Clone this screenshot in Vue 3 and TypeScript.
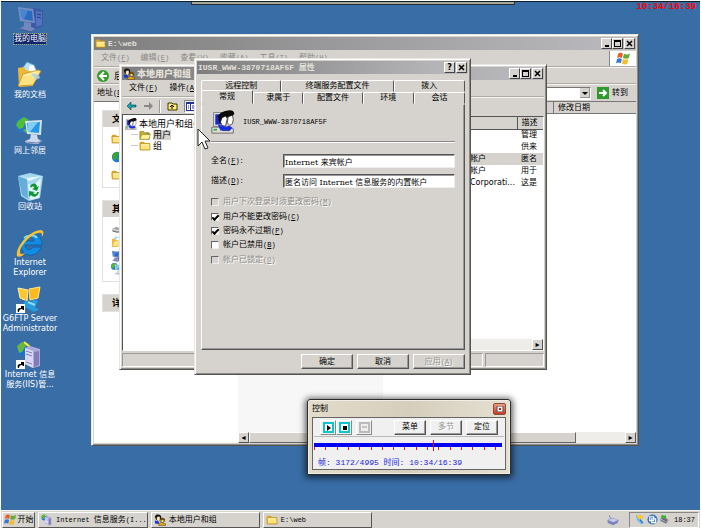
<script setup lang="ts">
import { h, ref } from 'vue'

// Renders text with Latin runs in the monospaced face; "&F" marks an underlined access key.
const Mix = (props: { t: string }) =>
  h(
    'span',
    { class: 'mix' },
    (props.t.match(/&.|[\x21-\x25\x27-\x7e ]+|[^\x20-\x7e]+/g) ?? []).map((s) =>
      s[0] === '&'
        ? h('u', { class: 'lat' }, s[1])
        : s.charCodeAt(0) < 128
          ? h('span', { class: 'lat' }, s)
          : s,
    ),
  )
Mix.props = ['t']

const art: Record<string, string> = {
  computer:
    '<path d="M18 3l9 2v16l-8 3-4-3V5z" fill="#3c55a5"/><path d="M20 6l6 1v13l-6 2z" fill="#5975c4"/><path d="M21 9l4 1M21 12l4 1" stroke="#24387c"/><path d="M2 2l15 2 2 14-15-2z" fill="#8296c6"/><path d="M4 4l12 2 1 10-11-2z" fill="#286bc5"/><path d="M4 4l8 1-4 9H6z" fill="#4e8bda"/><path d="M8 17l7 1v4l5 2-4 3-13-3 5-3z" fill="#7e8cc1"/><path d="M4 24l11 3 5-3" fill="none" stroke="#455499"/>',
  docs:
    '<path d="M11 1l7 3 6 13-13 5L6 8z" fill="#b9e0fa" stroke="#5d9cd2" stroke-width=".7"/><path d="M13 5l4-1 5 10-9 4z" fill="#fff"/><path d="M2 7l6-1 2 3 7 2v14l-14 1z" fill="#efb936"/><path d="M2 25L7 13l15-4 3 1-8 14z" fill="#ffe381" stroke="#c28d20" stroke-width=".7"/><path d="M7 15l14-4" stroke="#fff7bd"/><path d="M15 12l5 7 2-5" fill="#abd5ef"/>',
  network:
    '<circle cx="8" cy="8" r="8" fill="#2874cf"/><path d="M2 4l6-4 5 3-4 3-2 5-4 1-3-4zM7 13l5-2 3 2-5 3z" fill="#51bd37"/><path d="M9 4l17-1-1 15-14-1z" fill="#d4e2ef"/><path d="M11 6l13-1-1 11-11-1z" fill="#2696e6"/><path d="M12 6l10-1-8 10h-2z" fill="#81cef8"/><path d="M15 17l6 1 1 4 4 2-4 3-12-1-1-2 5-2z" fill="#ced8ed"/><path d="M10 25l11 1 5-2" fill="none" stroke="#7280b0"/>',
  recycle:
    '<path d="M2 3l12-3 13 3-3 22-11 3L5 23z" fill="#a6d7f0"/><path d="M2 3l9 2 15-2-13 5z" fill="#e7f8ff"/><path d="M2 3l4 19 6 4-1-20z" fill="#66add7"/><path d="M12 11l5 2 8-8-2 20-9 2z" fill="#e2f5ff"/><path d="M14 13c3-4 7-3 7 1l2-1-2 5-5-2 2-1c0-2-2-2-3 0zM23 19c-1 5-6 6-8 3l-2 2v-6l6 1-2 1c2 2 4 1 4-1z" fill="#149636"/>',
  ie:
    '<path d="M26 16H9c0 5 6 6 8 2h8c-2 6-7 9-13 8C1 22 3 7 14 5c8-1 12 4 12 11zM9 12h9c-1-5-8-5-9 0z" fill="#138be0" stroke="#0759a5" stroke-width=".7"/><path d="M8 9c3-3 10-4 13 0" fill="none" stroke="#80d9ff" stroke-width="2"/><path d="M1 27C-1 18 14 1 25 1c4 1 2 5 1 7 0-3 0-5-4-4C14 6 3 18 4 24c1 2 4 1 6-1-3 4-7 6-9 4z" fill="#f9c231"/>',
  g6:
    '<path d="M2 3l10 2-1 11-7-3z" fill="#ffc631" stroke="#fff0a1"/><path d="M13 4l11-2-2 11-8 2z" fill="#ffb91c" stroke="#ffe788"/><path d="M9 15l6 3 3-4 4 2-3 6 4 3-5 2-5-3-6-2z" fill="#269cdf"/><path d="M12 17l7 3" stroke="#89dcff" stroke-width="2"/>',
  iis:
    '<circle cx="8" cy="8" r="7" fill="#1474cf"/><path d="M1 5l5-4 8 2-5 3-3 5-3 1z" fill="#68b63e"/><path d="M8 1l6 5" stroke="#ffe256" stroke-width="2"/><path d="M9 7l5-2 10 3v17l-7 2-8-4z" fill="#aca9dc"/><path d="M9 7l8 3v17l-8-4z" fill="#d9d8f7"/><path d="M18 11l5-1v14l-5 2z" fill="#817cb9"/><path d="M10 10l6 2M10 13l6 2M10 21l6 2" stroke="#827fb5"/>',
  folder:
    '<path d="M1 7l3-3h7l3 3h12v17H2z" fill="#dca624"/><path d="M3 9h22l1 14H3z" fill="#ffe47a" stroke="#936600"/><path d="M4 11h20" stroke="#fff9c4" stroke-width="2"/>',
  openfolder:
    '<path d="M2 6h9l2 3h11v15H2z" fill="#ccae2c" stroke="#5c4d00"/><path d="M7 13h20l-4 11H2z" fill="#fff59c" stroke="#766600"/><path d="M18 8l5 5" stroke="#555" stroke-width="2"/>',
  users:
    '<path d="M3 3h14v16H3z" fill="#e5e3de" stroke="#777"/><path d="M5 5h11v12H5z" fill="#162bc4"/><path d="M1 20h22l3 2v5H1z" fill="#dedbd4" stroke="#646464"/><path d="M3 23h4" stroke="#27af43" stroke-width="2"/><path d="M13 24h9" stroke="#444"/><path d="M8 8C10 3 14 2 18 1c5-2 10 0 9 4l-3 3-6 1-3 2-2 5-3-1z" fill="#080808"/><path d="M13 9l4-2 2 3-1 4-1 5-4-1-2-4z" fill="#fff" stroke="#111" stroke-width=".8"/><path d="M20 8l5-2 1 5-1 5-3 2-3-3z" fill="#fff" stroke="#111" stroke-width=".8"/><path d="M8 17l5 1 4 2 4-2 4 3-3 3H11z" fill="#172ee0"/>',
  people:
    '<path d="M2 6C4-1 17 0 17 7l-2 7H5z" fill="#111"/><path d="M7 6h7v8l-4 3-4-4z" fill="#ffefbd" stroke="#111"/><path d="M2 15l8 2 3 6H3z" fill="#1734d5"/><path d="M15 12c2-5 10-4 11 2l-3 5h-7z" fill="#714600"/><path d="M17 13h6v5l-3 3-4-3z" fill="#ffdd71" stroke="#111"/><path d="M11 22l7-3 9 4v4H11z" fill="#e0a31d" stroke="#3c2700"/>',
  flag:
    '<path d="M4 5c3-3 6-2 9 0l-2 8c-3-2-6-2-9 0z" fill="#ed5b2d"/><path d="M15 5c4 2 7 2 11-1l-2 9c-4 2-7 2-11 0z" fill="#62ae35"/><path d="M2 15c3-2 6-2 9 0l-2 8c-3-2-6-2-9 0z" fill="#3676d2"/><path d="M13 15c3 2 7 2 10 0l-2 9c-3 2-7 2-10-1z" fill="#f5bd28"/>',
  globe:
    '<circle cx="14" cy="14" r="12" fill="#247bd2"/><path d="M4 8l9-6 8 4-6 4-1 7-6 4-5-5zM18 14l7 1-5 8-5-2z" fill="#37a62d"/>',
  printer:
    '<path d="M2 14l10-5 14 5-9 8-14-3z" fill="#a7a7a7"/><path d="M2 14l14 4 10-4" fill="none" stroke="#eee" stroke-width="2"/><path d="M4 19l12 3 9-6" fill="none" stroke="#666" stroke-width="2"/>',
  key:
    '<path d="M2 3l12-1 8 7-8 4 9 10-7 3L5 16z" fill="#6cbdf0"/><path d="M4 2l12 1 6 6-8 5-6-2z" fill="#ffc62d"/><path d="M13 14l6 9" stroke="#226ab6" stroke-width="3"/>',
  grid:
    '<circle cx="14" cy="14" r="13" fill="#3878b9"/><path d="M7 7h10v10H7zM12 12h10v10H12z" fill="none" stroke="#fff" stroke-width="3"/>',
  eject:
    '<path d="M3 12l8-7 14 11-7 9-14-7z" fill="#747a80"/><path d="M4 13l12 5 8-1" stroke="#d8dde2" stroke-width="2"/><path d="M10 11l-6-5 6-5v3h8v6h-8z" fill="#38b52f"/>',
  drive:
    '<path d="M1 14l10-5 16 5-2 7-11 5-12-5z" fill="#7b82bc"/><path d="M2 14l10-4 14 4-11 5z" fill="#c6c9ec"/><path d="M10 10L6 7V3" stroke="#7981bb" fill="none" stroke-width="2"/>',
}
const Icon = (p: { n: string; s: number }) =>
  h('svg', { viewBox: '0 0 28 28', width: p.s, height: p.s, class: 'icon', 'aria-hidden': 'true', innerHTML: art[p.n] })
Icon.props = ['n', 's']

const shortcuts = [
  { icon: 'computer', lines: ['我的电脑'], selected: true },
  { icon: 'docs', lines: ['我的文档'] },
  { icon: 'network', lines: ['网上邻居'] },
  { icon: 'recycle', lines: ['回收站'] },
  { icon: 'ie', lines: ['Internet', 'Explorer'] },
  { icon: 'g6', lines: ['G6FTP Server', 'Administrator'], link: true },
  { icon: 'iis', lines: ['Internet 信息', '服务(IIS)管...'], link: true },
]
const menus = ['文件(&F)', '编辑(&E)', '查看(&V)', '收藏(&A)', '工具(&T)', '帮助(&H)']
const side = [
  { title: '文', icons: ['folder', 'globe', 'folder'], cls: 'files' },
  { title: '其', icons: ['printer', 'docs', 'computer', 'network'], cls: 'places' },
  { title: '详', icons: [], cls: 'details' },
]
const accounts = [
  { name: '', note: '管理' },
  { name: '', note: '供来' },
  { name: '帐户', note: '匿名', selected: true },
  { name: '帐户', note: '用于' },
  { name: 'Corporati...', note: '这是' },
]
const tabsBack = ['远程控制', '终端服务配置文件', '拨入']
const tabsFront = ['常规', '隶属于', '配置文件', '环境', '会话']
const fullName = ref('Internet 来宾帐户')
const description = ref('匿名访问 Internet 信息服务的内置帐户')
const options = ref([
  { text: '用户下次登录时须更改密码(&M)', on: false, off: true },
  { text: '用户不能更改密码(&C)', on: true, off: false },
  { text: '密码永不过期(&P)', on: true, off: false },
  { text: '帐户已禁用(&B)', on: false, off: false },
  { text: '帐户已锁定(&O)', on: false, off: true },
])
const tasks = [
  { icon: 'iis', text: 'Internet 信息服务(I...' },
  { icon: 'people', text: '本地用户和组' },
  { icon: 'folder', text: 'E:\\web' },
]
</script>

<template>
  <div class="screen">
    <main class="desktop">
      <nav class="shortcuts">
        <a v-for="s in shortcuts" :key="s.icon" href="#" class="shortcut">
          <span class="pic" :class="{ dim: s.selected }">
            <Icon :n="s.icon" :s="28" />
            <svg v-if="s.link" class="arrow" viewBox="0 0 9 9" width="9" height="9"><path d="M0 0h9v9H0z" fill="#fff" /><path d="M2 8c-1-3 0-4 3-4V2h3v4H7L6 5C4 5 3 6 3 8z" fill="#000" /></svg>
          </span>
          <span class="label" :class="{ chosen: s.selected }"><span v-for="l in s.lines" :key="l">{{ l }}</span></span>
        </a>
      </nav>
      <div class="handle"></div>
      <div class="clock">10:34/16:39</div>

      <section class="win explorer">
        <header class="title"><Icon n="folder" :s="11" /><Mix class="name" t="E:\web" /><span class="ctl">
          <button aria-label="最小化"><i class="min"></i></button><button aria-label="最大化"><i class="max"></i></button><button class="x" aria-label="关闭"><svg viewBox="0 0 7 7" width="7" height="7"><path d="M1 1l5 5M6 1L1 6" stroke="#000" stroke-width="1.5" /></svg></button></span></header>
        <div class="menubar grey"><Mix v-for="m in menus" :key="m" :t="m" /><span class="flagbox"><Icon n="flag" :s="15" /></span></div>
        <div class="tools">
          <svg viewBox="0 0 12 12" width="12" height="12"><circle cx="6" cy="6" r="6" fill="#329b29" /><path d="M7 2L3 6l4 4M3 6h7" fill="none" stroke="#fff" stroke-width="2" /></svg>后退
        </div>
        <div class="address">
          <label for="addr"><Mix t="地址(&D)" /></label>
          <span class="combo"><select id="addr"><option></option></select><svg viewBox="0 0 10 10" width="10" height="10"><path d="M0 0h10v10H0z" fill="#d6d3ce" /><path d="M0 10h10V0" fill="none" stroke="#555" /><path d="M2 4h6L5 7z" /></svg></span>
          <button class="go"><svg viewBox="0 0 12 12" width="12" height="12"><path d="M0 0h12v12H0z" fill="#2d9a2b" /><path d="M2 6h7M6 3l3 3-3 3" fill="none" stroke="#fff" stroke-width="2" /></svg>转到</button>
        </div>
        <div class="ebody">
          <aside>
            <div v-for="b in side" :key="b.title" class="box" :class="b.cls"><h3>{{ b.title }}</h3><div v-if="b.icons.length" class="stack"><Icon v-for="(n, i) in b.icons" :key="i" :n="n" :s="12" /></div></div>
          </aside>
          <div class="files-view">
            <div class="colhead"><span>修改日期</span></div>
            <div class="blank"><div class="shade"></div></div>
            <div class="scroll"><button class="sb" aria-label="向左">◂</button><div class="thumb"></div><button class="sb end" aria-label="向右">▸</button></div>
          </div>
        </div>
      </section>

      <section class="win manager">
        <header class="title"><Icon n="people" :s="12" /><b class="name">本地用户和组</b><span class="ctl">
          <button aria-label="最小化"><i class="min"></i></button><button aria-label="最大化"><i class="max"></i></button><button class="x" aria-label="关闭"><svg viewBox="0 0 7 7" width="7" height="7"><path d="M1 1l5 5M6 1L1 6" stroke="#000" stroke-width="1.5" /></svg></button></span></header>
        <div class="menubar"><Mix t="文件(&F)" /><Mix t="操作(&A)" /></div>
        <div class="tools">
          <svg viewBox="0 0 10 8" width="10" height="8"><path d="M0 4l4-4v3h5v2H4v3z" fill="#0aa8b5" stroke="#123" stroke-width=".5" /></svg>
          <svg viewBox="0 0 10 8" width="10" height="8"><path d="M10 4L6 0v3H1v2h5v3z" fill="#888" /></svg>
          <i class="sep"></i>
          <svg viewBox="0 0 11 10" width="11" height="10"><path d="M1 2h4l1 1h4v6H1z" fill="#ffec75" stroke="#3c3600" /><path d="M5 8V5M3 6l2-2 2 2" fill="none" stroke="#000" /></svg>
          <span class="pressed"><svg viewBox="0 0 10 9" width="10" height="9"><path d="M0 0h10v9H0z" fill="#24329c" /><path d="M1 2h3v6H1zM5 2h4v6H5z" fill="#fff" /><path d="M2 4h1M2 6h1M7 3v4" stroke="#24329c" /></svg></span>
        </div>
        <div class="mbody">
          <ul class="tree">
            <li><Icon n="users" :s="12" /><span>本地用户和组(本地)</span></li>
            <li class="kid"><Icon n="openfolder" :s="12" /><span class="sel">用户</span></li>
            <li class="kid"><Icon n="folder" :s="12" /><span>组</span></li>
          </ul>
          <div class="list">
            <table>
              <thead><tr><th></th><th class="note">描述</th></tr></thead>
              <tbody><tr v-for="(a, i) in accounts" :key="i" :class="{ sel: a.selected }"><td>{{ a.name }}</td><td class="note">{{ a.note }}</td></tr></tbody>
            </table>
            <div class="scroll"><span class="grow"></span><button class="sb end" aria-label="向右">▸</button></div>
          </div>
        </div>
        <footer class="status"><span></span><span></span></footer>
      </section>

      <section class="win dialog">
        <header class="title"><Mix class="name" t="IUSR_WWW-3870718AF5F 属性" /><span class="ctl"><button aria-label="帮助"><b>?</b></button><button class="x" aria-label="关闭"><svg viewBox="0 0 7 7" width="7" height="7"><path d="M1 1l5 5M6 1L1 6" stroke="#000" stroke-width="1.5" /></svg></button></span></header>
        <div class="tabs back"><button v-for="t in tabsBack" :key="t">{{ t }}</button></div>
        <div class="tabs front"><button v-for="(t, i) in tabsFront" :key="t" :class="{ active: i === 0 }">{{ t }}</button></div>
        <form class="sheet" @submit.prevent>
          <div class="who"><Icon n="users" :s="24" /><Mix t="IUSR_WWW-3870718AF5F" /></div>
          <div class="field"><label for="full"><Mix t="全名(&F):" /></label><input id="full" v-model="fullName" type="text" /></div>
          <div class="field"><label for="desc"><Mix t="描述(&D):" /></label><input id="desc" v-model="description" type="text" /></div>
          <div class="checks">
            <label v-for="o in options" :key="o.text" :class="{ off: o.off }"><input v-model="o.on" type="checkbox" :disabled="o.off" /><Mix :t="o.text" /></label>
          </div>
        </form>
        <div class="actions"><button class="btn">确定</button><button class="btn">取消</button><button class="btn" disabled><Mix t="应用(&A)" /></button></div>
      </section>

      <svg class="cursor" viewBox="0 0 13 22" width="13" height="22"><path d="M1 1v17l4-4 3 7 3-1-3-7h5z" fill="#fff" stroke="#222" /></svg>

      <section class="player">
        <header><span>控制</span><button aria-label="关闭"><svg viewBox="0 0 8 6" width="8" height="6"><path d="M1 0h6v6H1z" fill="#eee" stroke="#555" /><path d="M3 2h2v2H3z" fill="#933" /></svg></button></header>
        <div class="pane">
          <div class="prow">
            <button class="pb" aria-label="播放"><svg viewBox="0 0 11 11" width="11" height="11"><path d="M1 1h9v9H1z" fill="#fff" stroke="#10c4cc" stroke-width="2" /><path d="M4 3l4 3-4 3z" /></svg></button>
            <button class="pb" aria-label="停止"><svg viewBox="0 0 11 11" width="11" height="11"><path d="M1 1h9v9H1z" fill="#fff" stroke="#10c4cc" stroke-width="2" /><path d="M4 4h4v4H4z" /></svg></button>
            <button class="pb last" aria-label="循环" disabled><svg viewBox="0 0 11 11" width="11" height="11"><path d="M1 1h9v9H1z" fill="#eee" stroke="#bbb" stroke-width="2" /><path d="M3 5h5" stroke="#999" /></svg></button>
            <button class="btn">菜单</button><button class="btn" disabled>多节</button><button class="btn">定位</button>
          </div>
          <svg class="track" viewBox="0 0 188 12" preserveAspectRatio="none" shape-rendering="crispEdges"><path d="M0 3h188v4H0z" fill="#0000f0" /><rect v-for="n in 17" :key="n" :x="Math.round((n - 1) * 11.3)" y="7" width="1" height="3" fill="#f01020" /><rect x="119" y="0" width="1" height="11" fill="#f00020" /></svg>
          <p>帧: 3172/4995 时间: 10:34/16:39</p>
        </div>
      </section>
    </main>

    <footer class="taskbar">
      <button class="start"><Icon n="flag" :s="13" />开始</button>
      <button v-for="t in tasks" :key="t.text" class="task"><Icon :n="t.icon" :s="12" /><Mix :t="t.text" /></button>
      <Icon class="lang" n="drive" :s="12" />
      <div class="tray"><Icon n="key" :s="11" /><Icon n="grid" :s="11" /><Icon n="eject" :s="11" /><Mix t="18:37" /></div>
    </footer>
  </div>
</template>

<style>
body { margin: 0; background: #fff; }
.mix { white-space: pre; }
.mix .lat { font: 7px/10px "Liberation Mono", monospace; }
.mix u { text-underline-offset: 1px; }
.title .mix .lat { font-size: 8px; font-weight: bold; }
.icon { display: block; flex: none; }
</style>

<style scoped>
* { box-sizing: border-box; }
.screen {
  min-height: 100vh; padding: 1px 1px 4px; display: flex; flex-direction: column;
  font: 8px/10px "DejaVu Sans", "Noto Sans CJK SC", sans-serif; color: #000;
}
button { font: inherit; color: inherit; margin: 0; padding: 0; border: 0; background: none; display: flex; align-items: center; justify-content: center; }
.desktop { flex: 1; position: relative; overflow: hidden; background: #396da5; border-top: 1px solid #0c1f25; }
.shortcuts { width: 58px; padding-top: 3px; display: flex; flex-direction: column; }
.shortcut { height: 56px; display: flex; flex-direction: column; align-items: center; gap: 1px; color: #fff; text-decoration: none; }
.pic { position: relative; }
.dim { opacity: .85; }
.arrow { position: absolute; left: 0; bottom: 0; }
.label { display: flex; flex-direction: column; align-items: center; white-space: nowrap; }
.chosen { background: #10246b; outline: 1px dotted #a9a36c; }
.handle { position: absolute; left: 190px; top: 0; width: 324px; height: 3px; background: #aaa594; border: 1px solid #263139; border-top: 0; }
.clock { position: absolute; right: 4px; top: 0; font: bold 9px/10px "Liberation Mono", monospace; color: #f00; }

.win { position: absolute; display: flex; flex-direction: column; padding: 2px; background: #d6d3ce; border: 1px solid; border-color: #e8e6e1 #55534f #55534f #e8e6e1; box-shadow: inset 1px 1px #fff, inset -1px -1px #8c8a86; }
.explorer { left: 90px; top: 32px; width: 548px; height: 412px; }
.manager { left: 118px; top: 62px; width: 428px; height: 306px; }
.dialog { left: 193px; top: 56px; width: 277px; height: 317px; }
.title { height: 13px; flex: none; display: flex; align-items: center; gap: 2px; padding: 0 1px; color: #e3e0da; font-weight: bold; background: linear-gradient(90deg, #7e7e7e, #bcbcc0); }
.manager .name { font-size: 9px; }
.ctl { margin-left: auto; display: flex; color: #000; }
.ctl button { width: 11px; height: 11px; background: #d6d3ce; border: 1px solid; border-color: #fff #444 #444 #fff; }
.ctl .x { margin-left: 1px; }
.min { width: 4px; height: 2px; background: #000; margin-top: 4px; }
.max { width: 7px; height: 7px; border: 1px solid #000; border-top-width: 2px; }
.menubar { height: 17px; flex: none; display: flex; align-items: center; gap: 11px; padding-left: 7px; border-bottom: 1px solid #aeaba5; }
.grey { color: #8a8884; }
.flagbox { margin-left: auto; width: 27px; height: 15px; background: #fff; border-left: 1px solid #888; display: grid; place-items: center; }
.tools { height: 17px; flex: none; display: flex; align-items: center; gap: 5px; padding-left: 3px; border-top: 1px solid #f5f4f0; border-bottom: 1px solid #aeaba5; font-size: 9px; }
.sep { width: 2px; height: 13px; border-left: 1px solid #999; border-right: 1px solid #fff; }
.pressed { width: 14px; height: 13px; display: grid; place-items: center; background: #eceae6; border: 1px solid; border-color: #888 #fff #fff #888; }
.address { height: 17px; flex: none; display: flex; align-items: center; gap: 6px; padding: 0 8px 0 3px; border-top: 1px solid #f5f4f0; }
.combo { flex: 1; display: flex; align-items: center; height: 13px; background: #fff; border: 1px solid; border-color: #777 #fff #fff #777; }
.combo select { flex: 1; height: 11px; border: 0; appearance: none; background: #fff; padding: 0; font: inherit; }
.go { gap: 3px; }
.ebody { flex: 1; min-height: 0; display: flex; background: #fff; border-top: 1px solid #777; }
aside { width: 144px; padding: 8px; }
.box { border: 1px solid #e2e0dc; width: 130px; margin-bottom: 12px; }
.box h3 { margin: 0; height: 16px; padding-left: 9px; background: #d6d3ce; font: bold 9px/16px "Noto Sans CJK SC", sans-serif; }
.stack { display: flex; flex-direction: column; justify-content: space-between; padding-left: 8px; }
.files .stack { height: 60px; padding-top: 6px; padding-bottom: 6px; }
.places .stack { height: 64px; padding-top: 6px; padding-bottom: 6px; }
.files-view { flex: 1; display: flex; flex-direction: column; }
.colhead { height: 12px; background: #d6d3ce; border-bottom: 1px solid #777; display: flex; justify-content: flex-end; }
.colhead span { width: 83px; padding-left: 4px; border-left: 1px solid #777; line-height: 11px; }
.blank { flex: 1; display: flex; align-items: flex-end; }
.shade { width: 145px; height: 57px; background: #f7f7f7; }
.scroll { height: 11px; display: flex; background: #eeedea; }
.sb { width: 11px; height: 11px; background: #d6d3ce; border: 1px solid; border-color: #fff #555 #555 #fff; font-size: 8px; }
.thumb { width: 327px; background: #d6d3ce; border: 1px solid; border-color: #fff #666 #666 #fff; }
.end { margin-left: auto; }

.manager .menubar { padding-left: 7px; gap: 12px; }
.manager .tools { gap: 6px; padding-left: 5px; border-bottom: 0; }
.mbody { flex: 1; min-height: 0; display: flex; gap: 3px; padding-bottom: 2px; }
.tree { width: 176px; margin: 0; padding: 3px 2px; list-style: none; font-size: 9px; background: #fff; border: 1px solid; border-color: #555 #fff #fff #555; }
.tree li { height: 11px; display: flex; align-items: center; gap: 2px; white-space: nowrap; }
.kid { padding-left: 14px; background: linear-gradient(#c9c9c9, #c9c9c9) 6px 5px / 7px 1px no-repeat; }
.tree .sel { background: #d6d3ce; }
.list { flex: 1; min-width: 0; display: flex; flex-direction: column; margin-top: 2px; background: #fff; border: 1px solid; border-color: #555 #fff #fff #555; }
table { width: 100%; table-layout: fixed; border-collapse: collapse; margin-bottom: auto; }
th { height: 12px; background: #d6d3ce; border-bottom: 1px solid #555; font-weight: normal; text-align: left; padding: 0; }
td { height: 12px; padding: 0 0 0 168px; white-space: nowrap; }
.note { width: 26px; padding-left: 4px; }
th.note { border-left: 1px solid #555; }
tr.sel { background: #d6d3ce; }
.status { height: 14px; flex: none; display: flex; gap: 2px; }
.status span { flex: 1; border: 1px solid; border-color: #999 #fff #fff #999; }
.status span:last-child { flex: none; width: 59px; }

.dialog { padding: 3px 5px 5px 6px; }
.dialog .title { margin: -1px -3px 6px -4px; }
.tabs { display: grid; height: 12px; flex: none; }
.back { grid-template-columns: 80fr 112fr 71fr; }
.front { grid-template-columns: 52fr 50fr 59fr 51fr 51fr; }
.tabs button { border: 1px solid; border-color: #fff #555 transparent #fff; border-radius: 2px 2px 0 0; background: #d6d3ce; }
.tabs .active { margin-top: -2px; }
.sheet { flex: 1; min-height: 0; margin: 0; padding: 5px 9px; border: 1px solid; border-color: transparent #555 #555 #fff; box-shadow: inset -1px -1px #999; }
.who { display: flex; align-items: center; gap: 8px; padding-bottom: 7px; margin-bottom: 12px; border-bottom: 1px solid #888; box-shadow: 0 1px #fff; }
.field { display: flex; align-items: center; height: 14px; margin-bottom: 6px; }
.field label { width: 72px; }
.field input { flex: 1; min-width: 0; height: 14px; padding: 0 1px; margin: 0; font: 8px/10px "DejaVu Serif", "Noto Sans CJK SC", serif; color: #000; background: #fff; border: 1px solid; border-color: #555 #eee #eee #555; border-radius: 0; outline: 0; box-shadow: inset 1px 1px #999; }
.checks { display: grid; grid-template-rows: repeat(5, 1fr); height: 72px; margin-top: 7px; }
.checks label { display: flex; align-items: center; gap: 4px; }
.checks input { appearance: none; width: 8px; height: 8px; margin: 0; background: #fff; border: 1px solid; border-color: #666 #eee #eee #666; display: grid; place-items: center; }
.checks input:disabled { background: #d6d3ce; }
.checks input:checked::before { content: ""; width: 5px; height: 2px; border: solid #000; border-width: 0 0 2px 2px; transform: rotate(-45deg); }
.off { color: #8c8a86; text-shadow: 1px 1px #fff; }
.actions { display: flex; justify-content: flex-end; gap: 4px; padding-top: 4px; flex: none; }
.btn { width: 52px; height: 15px; background: #d6d3ce; border: 1px solid; border-color: #fff #555 #555 #fff; box-shadow: inset -1px -1px #999; }
.btn:disabled { color: #96938f; text-shadow: 1px 1px #fff; }
.cursor { position: absolute; left: 196px; top: 126px; }

.player { position: absolute; left: 306px; top: 397px; width: 204px; height: 76px; display: flex; flex-direction: column; padding: 0 4px 4px; background: linear-gradient(90deg, #e3dccb, #d5cebd 50%, #e6e0d2); border: 1px solid #2c2c2c; border-radius: 3px 3px 1px 1px; box-shadow: 0 1px 6px 2px rgba(0, 0, 0, .6), inset 0 0 0 1px #f0ede5; }
.player header { height: 17px; display: flex; align-items: center; justify-content: space-between; padding-top: 1px; }
.player header button { width: 13px; height: 12px; background: linear-gradient(#ef9b82, #c63a20); border: 1px solid #8b4a3a; border-radius: 2px; }
.pane { flex: 1; display: flex; flex-direction: column; background: #f0f0f0; border: 1px solid #666; padding: 0 1px; }
.prow { display: flex; align-items: center; height: 19px; padding: 0 6px; border-bottom: 1px solid #bbb; }
.pb { width: 16px; height: 15px; border: 1px solid; border-color: #fff #888 #888 #fff; }
.last { margin: 0 auto 0 4px; }
.player .btn { width: 32px; background: #f0f0f0; margin-left: 4px; }
.track { width: 188px; height: 12px; margin-top: 3px; }
.pane p { margin: 6px 0 0 4px; color: #2222dd; white-space: pre; font: 8px/10px "Liberation Mono", "Noto Sans CJK SC", monospace; }

.taskbar { height: 18px; flex: none; display: flex; align-items: center; gap: 3px; background: #d6d3ce; border-top: 1px solid #f5f4f0; padding: 0 1px; }
.start, .task { height: 16px; border: 1px solid; border-color: #fff #555 #555 #fff; gap: 2px; }
.start { width: 33px; gap: 1px; }
.task { flex: 0 1 109px; justify-content: flex-start; padding-left: 2px; gap: 3px; }
.lang { margin-left: auto; margin-right: 7px; }
.tray { display: flex; align-items: center; gap: 1px; height: 16px; padding: 0 3px 0 5px; border: 1px solid; border-color: #888 #fff #fff #888; }
.tray .mix { margin-left: 3px; }
</style>
